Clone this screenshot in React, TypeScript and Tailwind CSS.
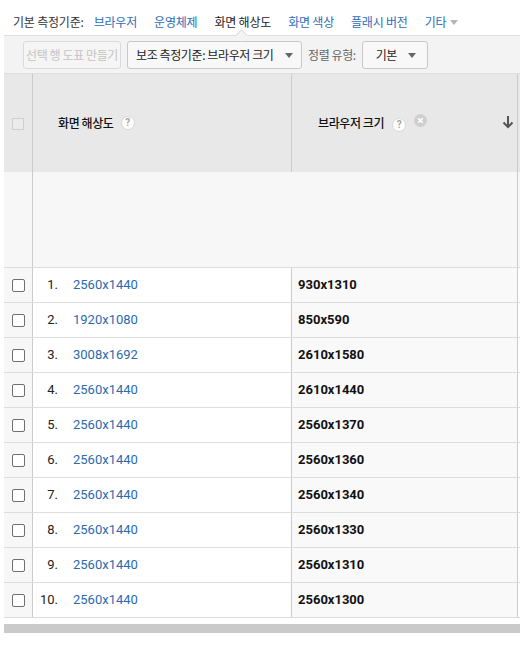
import React from "react";

const rows = [
  ["2560x1440", "930x1310"],
  ["1920x1080", "850x590"],
  ["3008x1692", "2610x1580"],
  ["2560x1440", "2610x1440"],
  ["2560x1440", "2560x1370"],
  ["2560x1440", "2560x1360"],
  ["2560x1440", "2560x1340"],
  ["2560x1440", "2560x1330"],
  ["2560x1440", "2560x1310"],
  ["2560x1440", "2560x1300"],
];

const ko = { fontFamily: '"Noto Sans CJK KR", "Noto Sans", sans-serif' };
const num = { fontFamily: 'Roboto, "Noto Sans CJK KR", sans-serif' };

// small grey caret used in dropdowns
const Caret = ({ className = "" }: { className?: string }) => (
  <svg width="8" height="5" viewBox="0 0 8 5" className={className}>
    <path d="M0 0h8L4 5z" fill="currentColor" />
  </svg>
);

const HelpIcon = () => (
  <span className="inline-flex h-[14px] w-[14px] items-center justify-center rounded-full border border-[#d8d8d8] bg-white text-[10px] font-bold leading-none text-[#a5a5a5]" style={num}>
    ?
  </span>
);

const RemoveIcon = () => (
  <svg width="13" height="13" viewBox="0 0 13 13">
    <circle cx="6.5" cy="6.5" r="6.5" fill="#cfcfcf" />
    <path d="M4.2 4.2l4.6 4.6M8.8 4.2l-4.6 4.6" stroke="#fff" strokeWidth="1.6" />
  </svg>
);

const Checkbox = () => (
  <span className="block h-[13px] w-[13px] rounded-[2px] border-[1.5px] border-[#6f6f6f] bg-white" />
);

export default function App() {
  const tabs = [
    { label: "브라우저", active: false },
    { label: "운영체제", active: false },
    { label: "화면 해상도", active: true },
    { label: "화면 색상", active: false },
    { label: "플래시 버전", active: false },
  ];

  return (
    <div className="h-[655px] w-[520px] overflow-hidden bg-white">
      <div className="ml-[4px] w-[516px]">
        {/* dimension tabs */}
        <div className="flex h-[35px] items-end pb-[4px] pl-[9px] text-[12px] tracking-[-0.2px]" style={ko}>
          <span className="mr-[10px] text-[#333]">기본 측정기준:</span>
          {tabs.map((t) => (
            <span key={t.label} className={`mr-[17px] ${t.active ? "text-[#222]" : "text-[#2d6bb8]"}`}>
              {t.label}
            </span>
          ))}
          <span className="flex items-center gap-[4px] text-[#2d6bb8]">
            기타
            <Caret className="text-[#b5b5b5]" />
          </span>
        </div>

        {/* toolbar */}
        <div className="relative flex h-[39px] items-center border-y border-[#dedede] bg-[#f3f3f3] pl-[19px] pt-[1px] text-[12px] tracking-[-0.4px]" style={ko}>
          <span className="absolute left-[233px] top-[-5px] h-[9px] w-[9px] rotate-45 border-l border-t border-[#dedede] bg-[#f3f3f3]" />
          <button className="h-[28px] w-[98px] rounded-[3px] border border-[#dadada] bg-[#f5f5f5] text-[#c4c4c4]">
            선택 행 도표 만들기
          </button>
          <button className="ml-[6px] flex h-[28px] w-[175px] items-center justify-between rounded-[3px] border border-[#c8c8c8] bg-[#f8f8f8] pl-[8px] pr-[8px] text-[#222]">
            <span>보조 측정기준: 브라우저 크기</span>
            <Caret className="text-[#666]" />
          </button>
          <span className="ml-[6px] text-[#666]">정렬 유형:</span>
          <button className="ml-[6px] flex h-[28px] w-[66px] items-center justify-center gap-[11px] rounded-[3px] border border-[#c8c8c8] bg-[#f8f8f8] pl-[2px] text-[#222]">
            <span>기본</span>
            <Caret className="text-[#666]" />
          </button>
        </div>

        {/* table header */}
        <div className="flex h-[98px] bg-[#e8e8e8]">
          <div className="flex w-[29px] items-center justify-center border-r border-[#cccccc]">
            <span className="mt-[2px] block h-[12px] w-[12px] border border-[#cfcfcf] bg-[#ebebeb]" />
          </div>
          <div className="flex w-[259px] items-center gap-[7px] border-r border-[#cccccc] pl-[25px] text-[12px] font-medium tracking-[-0.4px] text-[#111]" style={ko}>
            <span>화면 해상도</span>
            <HelpIcon />
          </div>
          <div className="relative flex w-[226px] items-center border-r border-[#cccccc] pl-[26px] text-[12px] font-medium tracking-[-0.4px] text-[#111]" style={ko}>
            <span>브라우저 크기</span>
            <span className="ml-[8px]"><HelpIcon /></span>
            <span className="ml-[8px] mb-[6px]"><RemoveIcon /></span>
            <svg width="12" height="14" viewBox="0 0 12 14" className="absolute right-[3px] top-[41px]">
              <path d="M6 1v11M1.5 7.5L6 12l4.5-4.5" stroke="#555" strokeWidth="2" fill="none" />
            </svg>
          </div>
        </div>

        {/* empty summary row */}
        <div className="flex h-[96px] border-b border-[#dddddd] bg-[#f7f7f7]">
          <div className="w-[29px] border-r border-[#cccccc]" />
          <div className="w-[485px] border-r border-[#cccccc]" />
        </div>

        {/* data rows */}
        {rows.map(([res, size], i) => (
          <div key={i} className="flex h-[35px] border-b border-[#dddddd] text-[13px]" style={num}>
            <div className="flex w-[29px] items-center justify-center border-r border-[#cccccc] bg-[#f7f7f7] pl-[1px]">
              <Checkbox />
            </div>
            <div className="flex w-[259px] items-center border-r border-[#cccccc] bg-white">
              <span className="w-[25px] text-right text-[#222]">{i + 1}.</span>
              <span className="ml-[15px] text-[#2a6aad]">{res}</span>
            </div>
            <div className="flex w-[226px] items-center border-r border-[#cccccc] bg-[#f9f9f9] pl-[6px] font-bold text-[#111]">
              {size}
            </div>
          </div>
        ))}

        {/* horizontal scrollbar */}
        <div className="mt-[6px] h-[9px] w-[516px] bg-[#cacaca]" />
      </div>
    </div>
  );
}
